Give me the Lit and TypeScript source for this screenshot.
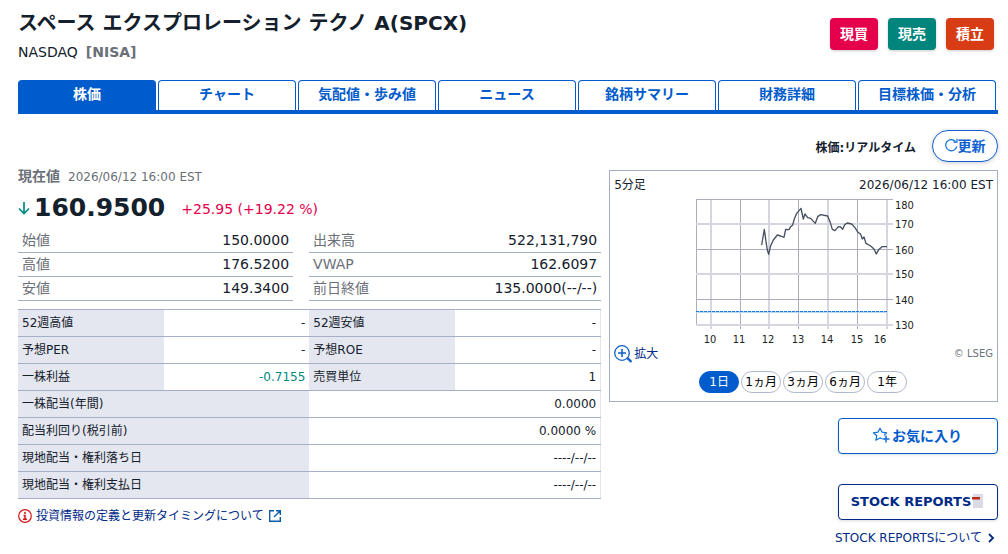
import { LitElement, html, css, svg } from "lit";
import { customElement, property, state } from "lit/decorators.js";
import { classMap } from "lit/directives/class-map.js";

const shared = css`
  * { box-sizing: border-box; }
  button { font: inherit; margin: 0; cursor: pointer; }
  a { text-decoration: none; color: #002a87; }
`;

@customElement("intraday-chart")
class IntradayChart extends LitElement {
  static styles = css`
    :host { display: block; }
    svg { display: block; width: 224px; height: 152px; }
    .grid { stroke: #adadbf; stroke-width: 1; fill: none; }
    .soft { stroke: #d6d6e0; stroke-width: 2; }
    .line { stroke: #465060; stroke-width: 4; fill: none; stroke-linejoin: round; }
    .previous { fill: none; stroke: #bcdaf8; stroke-width: 2; }
    .dash { stroke: #1a78e6; stroke-width: 1; stroke-dasharray: 3 1; }
    text { font: 11px "DejaVu Sans Condensed", "DejaVu Sans", sans-serif; fill: #222; }
  `;

  private hours = [
    { label: "10", x: 19, tx: 18, soft: true },
    { label: "11", x: 48.5, tx: 47, soft: false },
    { label: "12", x: 77, tx: 76, soft: true },
    { label: "13", x: 106.5, tx: 106, soft: false },
    { label: "14", x: 136, tx: 135, soft: true },
    { label: "15", x: 165.5, tx: 165, soft: false },
    { label: "16", x: 195, tx: 188, soft: true },
  ];

  private prices = [
    { label: "180", y: 4.5, ty: 14, soft: false },
    { label: "170", y: 29, ty: 33, soft: true },
    { label: "160", y: 54.5, ty: 59, soft: false },
    { label: "150", y: 79, ty: 83, soft: true },
    { label: "140", y: 104.5, ty: 109, soft: false },
    { label: "130", y: 130, ty: 134, soft: true },
  ];

  // Trading path in thirds of a chart unit, from the first trade to the close.
  private path =
    "65,150 68,132 73,103 78,140 82,165 86,178 92,152 100,135 112,120 122,123 132,127 137,103 147,104 152,95 158,90 163,72 170,55 183,40 190,72 195,57 203,68 212,70 226,85 233,65 242,59 263,63 270,80 277,103 285,107 295,95 302,96 308,103 315,88 322,84 335,87 345,98 354,112 362,118 367,132 372,126 378,145 392,153 402,162 409,177 416,164 426,155 441,155";

  render() {
    return html`<svg viewBox="0 0 224 152" role="img" aria-label="5分足チャート">
      <path class="grid" d="M4.5 4.5V130" />
      ${this.hours.map((h) => svg`<line class=${h.soft ? "grid soft" : "grid"} x1=${h.x} x2=${h.x} y1="4" y2="134" />`)}
      ${this.prices.map((p) => svg`<line class=${p.soft ? "grid soft" : "grid"} x1="4" x2="201" y1=${p.y} y2=${p.y} />`)}
      <path class="previous" d="M4 117H195" />
      <path class="previous dash" d="M4 116.5H195" />
      <g transform="translate(48 0) scale(0.3333)"><polyline class="line" points=${this.path} /></g>
      ${this.prices.map((p) => svg`<text x="203" y=${p.ty}>${p.label}</text>`)}
      ${this.hours.map((h) => svg`<text x=${h.tx} y="148" text-anchor="middle">${h.label}</text>`)}
    </svg>`;
  }
}

@customElement("chart-card")
class ChartCard extends LitElement {
  @state() private span = "1日";
  private spans = ["1日", "1ヵ月", "3ヵ月", "6ヵ月", "1年"];

  static styles = [
    shared,
    css`
      :host { display: block; border: 1px solid #a5adc2; padding: 4px 4px 8px; font-size: 12px; line-height: 20px; }
      .top, .bottom { display: flex; justify-content: space-between; }
      .plot { display: flex; justify-content: center; }
      .bottom { align-items: center; line-height: 18px; margin-top: -2px; }
      .zoom { display: flex; align-items: center; gap: 1px; }
      .credit { color: #6b7280; font-size: 10px; }
      .spans { display: flex; justify-content: center; gap: 2px; margin-top: 8px; padding-right: 1px; }
      .span { height: 22px; width: 40px; padding: 0; border: 1px solid #b3b9cc; border-radius: 11px; background: #fff; color: #000; line-height: 18px; white-space: nowrap; }
      .on { background: #005bcc; border-color: #005bcc; color: #fff; }
    `,
  ];

  render() {
    return html`
      <div class="top"><span>5分足</span><span>2026/06/12 16:00 EST</span></div>
      <div class="plot"><intraday-chart></intraday-chart></div>
      <div class="bottom">
        <a class="zoom" href="#zoom">
          <svg width="19" height="18" viewBox="0 0 19 18" fill="none" stroke="#0f62c9">
            <circle cx="8" cy="8" r="7.3" stroke-width="1.3" />
            <path d="M4 8h8M8 4v8" stroke-width="1.6" />
            <path d="M13.2 12.8l4.3 4.2" stroke-width="2.4" />
          </svg><span>拡大</span>
        </a>
        <span class="credit">© LSEG</span>
      </div>
      <div class="spans">
        ${this.spans.map(
          (s) => html`<button class=${classMap({ span: true, on: s === this.span })} @click=${() => (this.span = s)}>${s}</button>`
        )}
      </div>
    `;
  }
}

@customElement("quote-panel")
class QuotePanel extends LitElement {
  @property({ attribute: false }) ohlc = [["始値", "150.0000"], ["高値", "176.5200"], ["安値", "149.3400"]];
  @property({ attribute: false }) volume = [["出来高", "522,131,790"], ["VWAP", "162.6097"], ["前日終値", "135.0000(--/--)"]];
  private pairs = [
    ["52週高値", "-", "52週安値", "-"],
    ["予想PER", "-", "予想ROE", "-"],
    ["一株利益", "-0.7155", "売買単位", "1"],
  ];
  private wide = [
    ["一株配当(年間)", "0.0000"],
    ["配当利回り(税引前)", "0.0000 %"],
    ["現地配当・権利落ち日", "----/--/--"],
    ["現地配当・権利支払日", "----/--/--"],
  ];

  static styles = [
    shared,
    css`
      :host { display: block; min-width: 0; }
      .now { display: flex; align-items: baseline; gap: 8px; color: #6b6f78; line-height: 20px; font-size: 12px; }
      .now b { font-size: 14px; }
      .price { display: flex; align-items: center; line-height: 42px; }
      .price svg { margin-right: 4px; }
      .last { font-size: 25px; font-weight: bold; margin-right: 16px; }
      .change { font-size: 14px; color: #e5004c; padding-top: 2px; line-height: 36px; }
      .minis { display: grid; grid-template-columns: 275fr 292fr; gap: 16px; align-items: start; }
      table { border-collapse: collapse; width: 100%; table-layout: fixed; }
      th { font-weight: normal; text-align: left; }
      td { text-align: right; }
      th, td { padding: 0 4px; white-space: nowrap; }
      .mini { font-size: 14px; line-height: 23px; }
      .mini th { color: #6b6f78; width: 40%; }
      .mini tr { border-bottom: 1px solid #a5adc2; }
      .facts { margin-top: 8px; font-size: 12px; line-height: 26px; border-right: 1px solid #e4e7ef; }
      .facts tr { border-top: 1px solid #a5b0c8; border-bottom: 1px solid #a5b0c8; }
      .facts th { background: #e4e7ef; }
      .facts .down { color: #008a80; }
      .note { display: flex; align-items: center; gap: 4px; font-size: 12px; line-height: 18px; margin-top: 8px; }
    `,
  ];

  private mini(rows: string[][]) {
    return html`<table class="mini">
      ${rows.map(([k, v]) => html`<tr><th scope="row">${k}</th><td>${v}</td></tr>`)}
    </table>`;
  }

  render() {
    return html`
      <div class="now"><b>現在値</b><span>2026/06/12 16:00 EST</span></div>
      <div class="price">
        <svg width="12" height="14" viewBox="0 0 12 14" fill="none" stroke="#008a80" stroke-width="1.7"><path d="M6 1v11M1 7.5l5 5 5-5" /></svg>
        <span class="last">160.9500</span><span class="change">+25.95 (+19.22 %)</span>
      </div>
      <div class="minis">${this.mini(this.ohlc)}${this.mini(this.volume)}</div>
      <table class="facts">
        ${this.pairs.map(
          ([a, b, c, d]) => html`<tr>
            <th scope="row">${a}</th><td class=${b.length > 1 ? "down" : ""}>${b}</td>
            <th scope="row">${c}</th><td>${d}</td>
          </tr>`
        )}
        ${this.wide.map(([k, v]) => html`<tr><th scope="row" colspan="2">${k}</th><td colspan="2">${v}</td></tr>`)}
      </table>
      <a class="note" href="#definitions">
        <svg width="14" height="14" viewBox="0 0 14 14" fill="none" stroke="#d81414">
          <circle cx="7" cy="7" r="6.3" stroke-width="1.2" />
          <path d="M7 3v2M5.5 6.5H7V10M5 10.3h4" stroke-width="1.5" />
        </svg>
        <span>投資情報の定義と更新タイミングについて</span>
        <svg width="14" height="14" viewBox="0 0 14 14" fill="none" stroke="#0a5cab" stroke-width="1.4">
          <path d="M6 1.7H1.7v10.6h10.6V8M8 1.7h4.3V6M12 2L6 8" />
        </svg>
      </a>
    `;
  }
}

@customElement("app-root")
class AppRoot extends LitElement {
  @state() private tab = "株価";
  private tabs = ["株価", "チャート", "気配値・歩み値", "ニュース", "銘柄サマリー", "財務詳細", "目標株価・分析"];

  static styles = [
    shared,
    css`
      :host { display: block; padding: 10px 10px 6px 18px; background: #fff; color: #14202c; font-family: "DejaVu Sans", "Noto Sans CJK JP", sans-serif; font-size: 14px; }
      header { display: flex; justify-content: space-between; align-items: flex-start; }
      h1 { margin: 0; font-size: 20px; line-height: 26px; }
      .market { display: flex; gap: 8px; line-height: 20px; margin-top: 6px; }
      .market b { color: #6b6f78; }
      .trades { display: flex; gap: 10px; padding: 8px 4px 0 0; }
      .trade { width: 48px; height: 32px; padding: 0; border: 0; border-radius: 4px; color: #fff; font-weight: bold; line-height: 30px; box-shadow: 0 1px 3px #0003; }
      .buy { background: #e5004c; }
      .sell { background: #00857d; }
      .save { background: #d83c14; }
      .tabs { display: flex; margin-top: 18px; border-bottom: 4px solid #005bcc; }
      .tab { flex: 1; height: 30px; margin-right: 2px; border: 1px solid #005bcc; border-bottom: 0; border-radius: 4px 4px 0 0; color: #005bcc; font-weight: bold; text-align: center; line-height: 26px; white-space: nowrap; }
      .tab.on { background: #005bcc; color: #fff; }
      .update { display: flex; justify-content: flex-end; align-items: center; gap: 16px; margin-top: 16px; font-size: 12px; font-weight: bold; }
      .refresh { display: flex; align-items: center; justify-content: center; width: 66px; height: 32px; padding: 0 0 2px; border: 1px solid #0f5fd0; border-radius: 16px; background: #fff; color: #0f5fd0; font-size: 14px; box-shadow: 0 1px 4px #0003; }
      main { display: grid; grid-template-columns: 3fr 2fr; gap: 8px; margin-top: 4px; }
      aside { display: flex; flex-direction: column; align-items: flex-end; padding-top: 4px; min-width: 0; }
      chart-card { align-self: stretch; }
      .action { display: flex; align-items: center; justify-content: center; width: 160px; height: 36px; padding: 0 2px 2px 0; border: 1px solid #005bcc; border-radius: 4px; background: #fff; color: #005bcc; font-weight: bold; box-shadow: 0 1px 3px #0002; }
      .favorite { gap: 2px; margin-top: 16px; }
      .reports { margin-top: 30px; border-color: #002a87; color: #002a87; font-size: 13px; }
      .about { display: flex; align-items: center; gap: 4px; margin-top: 8px; padding-right: 2px; font-size: 12px; line-height: 20px; }
    `,
  ];

  render() {
    return html`
      <header>
        <div>
          <h1>スペース エクスプロレーション テクノ A(SPCX)</h1>
          <div class="market"><span>NASDAQ</span><b>[NISA]</b></div>
        </div>
        <div class="trades">
          <button class="trade buy">現買</button>
          <button class="trade sell">現売</button>
          <button class="trade save">積立</button>
        </div>
      </header>
      <nav class="tabs">
        ${this.tabs.map(
          (t) => html`<a href="#tab" class=${classMap({ tab: true, on: t === this.tab })} @click=${() => (this.tab = t)}>${t}</a>`
        )}
      </nav>
      <div class="update">
        <span>株価:リアルタイム</span>
        <button class="refresh">
          <svg width="13" height="14" viewBox="0 0 13 14" fill="none" stroke="#0f6fd8" stroke-width="1.2">
            <path d="M11.8 8.5A5.6 5.6 0 1 1 10.4 3.3M12 .8v3.4H8.4" />
          </svg>更新
        </button>
      </div>
      <main>
        <quote-panel></quote-panel>
        <aside>
          <chart-card></chart-card>
          <button class="action favorite">
            <svg width="18" height="17" viewBox="0 0 18 17" fill="none" stroke="#0f6fd8" stroke-width="1.2">
              <path d="M10 11.8L8 10.9l-4.1 2.3.9-4.5L1.3 5.8l4.6-.6L8 1.2l2.1 4 4.6.6-2.8 2.6" stroke-linejoin="round" />
              <path d="M14 8.5v7M10.5 12h7" stroke-width="1.5" />
            </svg>お気に入り
          </button>
          <button class="action reports">
            STOCK REPORTS<svg width="12" height="14" viewBox="0 0 12 14">
              <path d="M2 0h10v14H2z" fill="#dcdae6" /><path d="M1 3h8v2.5H1z" fill="#bd2a16" />
            </svg>
          </button>
          <a class="about" href="#reports">
            <span>STOCK REPORTSについて</span>
            <svg width="10" height="12" viewBox="0 0 10 12" fill="none" stroke="#002a87" stroke-width="1.8"><path d="M3 2l4 4-4 4" /></svg>
          </a>
        </aside>
      </main>
    `;
  }
}
